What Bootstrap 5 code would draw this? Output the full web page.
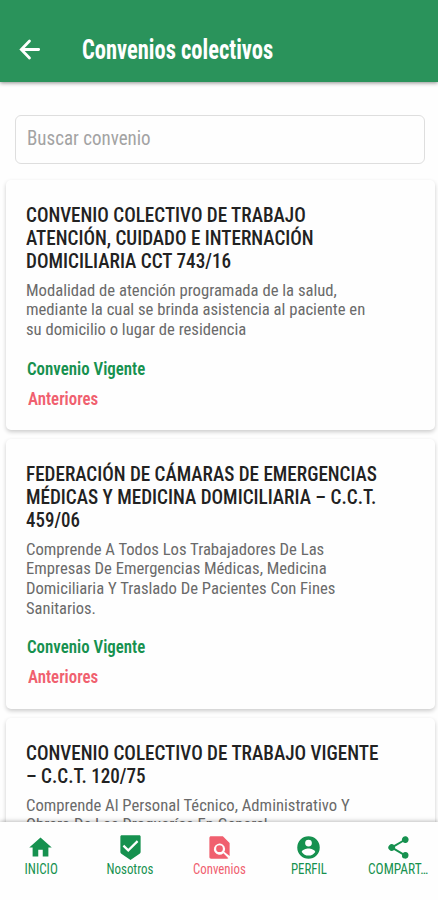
<!DOCTYPE html>
<html lang="es">
<head>
<meta charset="utf-8">
<meta name="viewport" content="width=device-width, initial-scale=1">
<title>Convenios colectivos</title>
<link href="https://cdn.jsdelivr.net/npm/bootstrap@5.3.0/dist/css/bootstrap.min.css" rel="stylesheet">
<style>
:root{--verde:#16914f;--rojo:#f0606f}
body{font-family:"Roboto Condensed",Roboto,sans-serif;font-stretch:75%;background:#fefefe}
.app-top{height:82px;background:#2a935b;box-shadow:0 1px 4px rgba(0,0,0,.45);padding:17px 0 0 15px;z-index:2}
.app-title{font-size:28px;font-weight:700;line-height:34px;margin-left:38px}
.search-wrap{padding:33px 13px 16px 15px}
.search-box{height:49px;border:1.5px solid #dedede;border-radius:6px;padding:0 10px 3px 11px;font-size:20.5px;color:#a3a3a3;background:#fefefe}
.agreement{margin:0 3px 9px 6px;border:0;border-radius:5px;box-shadow:0 2px 4px rgba(0,0,0,.2);padding:23.5px 20px 0;background:#fefefe}
.agr-title{font-size:19.3px;line-height:23px;font-weight:500;color:#222;margin:0 0 8px}
.agr-text{font-size:17.4px;line-height:19.7px;font-weight:400;color:#6a6a6a;margin:0}
.agr-link{font-size:17.6px;line-height:20px;font-weight:600;text-decoration:none;margin-left:.5px}
.agr-links{padding-top:3px;gap:10px}
.agr-link.rojo{margin-left:2px}
.verde{color:var(--verde)}.rojo{color:var(--rojo)}
.fit{display:block;width:max-content;white-space:nowrap;transform-origin:0 50%}
.app-bottom{height:78px;background:#fefefe;box-shadow:0 -1px 4px rgba(0,0,0,.25);z-index:2}
.tabs-row{width:447px;margin-left:-4px;padding-top:12px}
.tab-item{width:89.4px;text-decoration:none;font-size:14.3px;line-height:16px}
.tab-item .fit{transform-origin:50% 50%}
.tab-item svg{width:27px;height:27px;fill:currentColor}
</style>
</head>
<body>
<div class="vh-100 d-flex flex-column overflow-hidden">
  <header class="app-top d-flex align-items-center text-white flex-shrink-0 position-relative">
    <svg width="29" height="29" viewBox="0 0 24 24" fill="none" stroke="#fff" stroke-width="2.3" stroke-linecap="round"><path d="M12 5 5.2 12l6.8 7M5.4 12h14.2"/></svg>
    <h1 class="app-title mb-0"><span class="fit" data-w="191">Convenios colectivos</span></h1>
  </header>
  <main class="flex-grow-1 overflow-hidden">
    <div class="search-wrap"><div class="search-box d-flex align-items-center"><span class="fit" data-w="124">Buscar convenio</span></div></div>
    <article class="card agreement" style="height:250px">
      <h2 class="agr-title"><span class="fit" data-w="280">CONVENIO COLECTIVO DE TRABAJO</span><span class="fit" data-w="288">ATENCIÓN, CUIDADO E INTERNACIÓN</span><span class="fit" data-w="205">DOMICILIARIA CCT 743/16</span></h2>
      <p class="agr-text"><span class="fit" data-w="311">Modalidad de atención programada de la salud,</span><span class="fit" data-w="339">mediante la cual se brinda asistencia al paciente en</span><span class="fit" data-w="220">su domicilio o lugar de residencia</span></p>
      <div class="agr-links d-flex flex-column mt-3"><a class="agr-link verde"><span class="fit" data-w="118">Convenio Vigente</span></a><a class="agr-link rojo"><span class="fit" data-w="70">Anteriores</span></a></div>
    </article>
    <article class="card agreement" style="height:270px">
      <h2 class="agr-title"><span class="fit" data-w="351">FEDERACIÓN DE CÁMARAS DE EMERGENCIAS</span><span class="fit" data-w="350">MÉDICAS Y MEDICINA DOMICILIARIA – C.C.T.</span><span class="fit" data-w="54">459/06</span></h2>
      <p class="agr-text"><span class="fit" data-w="298">Comprende A Todos Los Trabajadores De Las</span><span class="fit" data-w="301">Empresas De Emergencias Médicas, Medicina</span><span class="fit" data-w="309">Domiciliaria Y Traslado De Pacientes Con Fines</span><span class="fit" data-w="70">Sanitarios.</span></p>
      <div class="agr-links d-flex flex-column mt-3"><a class="agr-link verde"><span class="fit" data-w="118">Convenio Vigente</span></a><a class="agr-link rojo"><span class="fit" data-w="70">Anteriores</span></a></div>
    </article>
    <article class="card agreement" style="height:240px">
      <h2 class="agr-title"><span class="fit" data-w="352">CONVENIO COLECTIVO DE TRABAJO VIGENTE</span><span class="fit" data-w="120">– C.C.T. 120/75</span></h2>
      <p class="agr-text"><span class="fit" data-w="324">Comprende Al Personal Técnico, Administrativo Y</span><span class="fit" data-w="242">Obrero De Las Droguerías En General</span></p>
    </article>
  </main>
  <nav class="app-bottom flex-shrink-0 position-relative">
    <div class="tabs-row d-flex">
      <a class="tab-item verde d-flex flex-column align-items-center"><svg viewBox="0 0 24 24"><path d="M10 20v-6h4v6h5v-8h3L12 3 2 12h3v8z"/></svg><span class="fit" data-w="33">INICIO</span></a>
      <a class="tab-item verde d-flex flex-column align-items-center"><svg viewBox="0 0 24 24"><path d="M19.8 1H4.200c-.7 0-1.200.5-1.200 1.200v13.700c0 .7.35 1.3.88 1.660L12 23l8.100-5.400c.54-.36.9-.97.9-1.660V2.200c0-.7-.5-1.200-1.200-1.200zM10 16l-5-5 1.400-1.400 3.600 3.570 7.600-7.600L19 7z"/></svg><span class="fit" data-w="47">Nosotros</span></a>
      <a class="tab-item rojo d-flex flex-column align-items-center"><svg viewBox="0 0 24 24"><path d="M21 19.590V8l-6-6H4.500C3.600 2 3 2.600 3 3.500v17c0 .9.6 1.500 1.500 1.500h14.200c.45 0 .85-.15 1.190-.4l-4.430-4.430A5 5 0 1 1 17 13c0 1.020-.31 1.960-.83 2.750zM9 13a3 3 0 1 0 6 0 3 3 0 0 0-6 0z"/></svg><span class="fit" data-w="53">Convenios</span></a>
      <a class="tab-item verde d-flex flex-column align-items-center"><svg viewBox="0 0 24 24"><path d="M12 2a10 10 0 1 0 0 20 10 10 0 0 0 0-20zm0 3a3 3 0 1 1 0 6 3 3 0 0 1 0-6zm0 14.2a7.2 7.2 0 0 1-6-3.22c.03-1.99 4-3.08 6-3.08s5.97 1.09 6 3.08a7.2 7.2 0 0 1-6 3.22z"/></svg><span class="fit" data-w="36">PERFIL</span></a>
      <a class="tab-item verde d-flex flex-column align-items-center"><svg viewBox="0 0 24 24"><path d="M18 16.08c-.76 0-1.44.3-1.96.77L8.91 12.7a3 3 0 0 0 0-1.4l7.05-4.11A3 3 0 1 0 15 5c0 .24.04.47.09.7L8.04 9.81a3 3 0 1 0 0 4.38l7.12 4.16a2.9 2.9 0 1 0 2.84-2.27z"/></svg><span class="fit" data-w="60">COMPART…</span></a>
    </div>
  </nav>
</div>
<script src="https://cdn.jsdelivr.net/npm/bootstrap@5.3.0/dist/js/bootstrap.bundle.min.js"></script>
<script>
// Condense each line of text to its intended width.
document.querySelectorAll('.fit').forEach(function (el) {
  el.style.transform = 'scaleX(' + (el.dataset.w / el.offsetWidth) + ')';
});
</script>
</body>
</html>
